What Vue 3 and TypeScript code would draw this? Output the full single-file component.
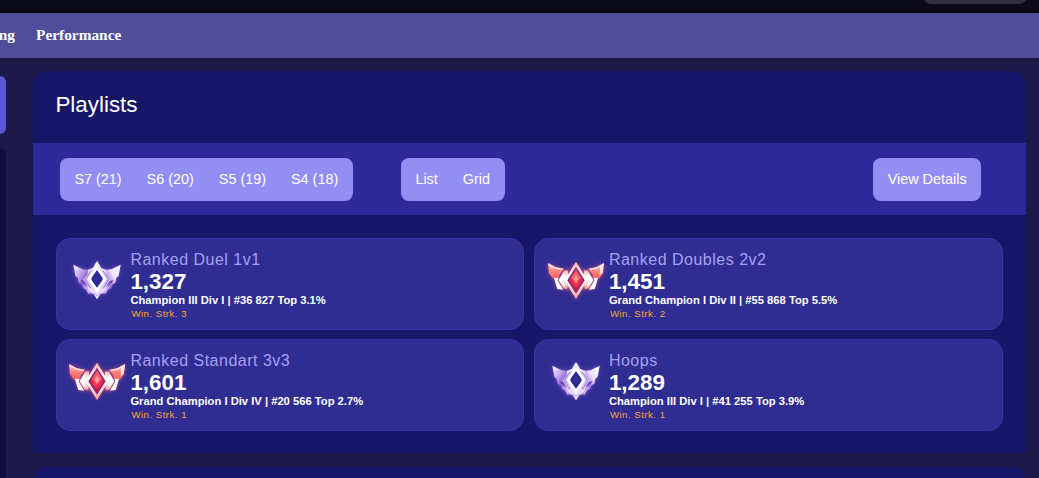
<script setup lang="ts">
interface Playlist {
  name: string
  rating: string
  detail: string
  streak: number
  rank: 'champion' | 'grand'
}

const seasons: string[] = ['S7 (21)', 'S6 (20)', 'S5 (19)', 'S4 (18)']
const views: string[] = ['List', 'Grid']

const playlists: Playlist[] = [
  { name: 'Ranked Duel 1v1', rating: '1,327', detail: 'Champion III Div I | #36 827 Top 3.1%', streak: 3, rank: 'champion' },
  { name: 'Ranked Doubles 2v2', rating: '1,451', detail: 'Grand Champion I Div II | #55 868 Top 5.5%', streak: 2, rank: 'grand' },
  { name: 'Ranked Standart 3v3', rating: '1,601', detail: 'Grand Champion I Div IV | #20 566 Top 2.7%', streak: 1, rank: 'grand' },
  { name: 'Hoops', rating: '1,289', detail: 'Champion III Div I | #41 255 Top 3.9%', streak: 1, rank: 'champion' },
]
</script>

<template>
  <div class="page">
    <header class="topbar"><div class="search"></div></header>
    <nav class="nav">
      <a class="clipped"><span>ng</span></a>
      <a>Performance</a>
    </nav>
    <div class="content">
      <aside class="side">
        <div class="side-active"></div>
        <div class="side-panel"></div>
      </aside>
      <main class="main">
        <section class="panel">
          <h2>Playlists</h2>
          <div class="toolbar">
            <div class="group"><span v-for="s in seasons" :key="s">{{ s }}</span></div>
            <div class="group views"><span v-for="v in views" :key="v">{{ v }}</span></div>
            <div class="group details"><span>View Details</span></div>
          </div>
          <div class="cards">
            <article v-for="p in playlists" :key="p.name" class="card">
              <svg v-if="p.rank === 'champion'" class="emblem champion" viewBox="-96 -72 192 144">
                <defs>
                  <linearGradient id="wingL" x1="0" y1="0" x2=".9" y2="1">
                    <stop offset="0" stop-color="#fff" /><stop offset=".35" stop-color="#c4a8f0" /><stop offset=".6" stop-color="#8a62cf" /><stop offset="1" stop-color="#c9aef2" />
                  </linearGradient>
                  <linearGradient id="wingR" x1="1" y1="0" x2="0" y2="1">
                    <stop offset="0" stop-color="#fff" /><stop offset=".4" stop-color="#ece1fc" /><stop offset=".65" stop-color="#9871d8" /><stop offset="1" stop-color="#c9aef2" />
                  </linearGradient>
                  <linearGradient id="plate" x1="0" y1="0" x2="0" y2="1">
                    <stop offset="0" stop-color="#fff" /><stop offset=".5" stop-color="#cfb8f3" /><stop offset="1" stop-color="#fff" />
                  </linearGradient>
                </defs>
                <path d="M-71-49 L-43-35 L-22-33 L-18 30 L-25 40 L-32 25 L-42 22 L-47 10 L-55 5 L-58-9 L-65-16Z" fill="url(#wingL)" />
                <path d="M71-49 L43-35 L22-33 L18 30 L25 40 L32 25 L42 22 L47 10 L55 5 L58-9 L65-16Z" fill="url(#wingR)" />
                <path d="M-50-2 L-34 0 L-26 12 L-44 7Z M50-2 L34 0 L26 12 L44 7Z" fill="#6d4cb0" />
                <path d="M-40 16 L-24 16 L-10 40 L-27 36Z M40 16 L24 16 L10 40 L27 36Z" fill="#c3a7ed" />
                <path d="M0-60 L13-39 L27-34 L28-20 L41-4 L29 13 L25 29 L12 36 L0 55 L-12 36 L-25 29 L-29 13 L-41-4 L-28-20 L-27-34 L-13-39Z" fill="url(#plate)" />
                <path d="M-18-31 L-35-4 L-19 22 M18-31 L35-4 L19 22" fill="none" stroke="#8b62d2" stroke-width="2.5" />
                <path d="M0-40 L24-6 L0 27 L-24-6Z" fill="#2e2a91" stroke="#fff" stroke-width="8" />
                <path d="M-26-6 L-17-11 V-1Z M26-6 L17-11 V-1Z" fill="#fff" />
                <path d="M-9 36 L0 44 L9 36" fill="none" stroke="#b594e8" stroke-width="3" />
              </svg>
              <svg v-else class="emblem grand" viewBox="-96 -72 192 144">
                <defs>
                  <linearGradient id="redWing" x1="0" y1="0" x2="0" y2="1">
                    <stop offset="0" stop-color="#ffd0cb" /><stop offset=".5" stop-color="#ff7f79" /><stop offset="1" stop-color="#ff5b5a" />
                  </linearGradient>
                  <linearGradient id="whiteRed" x1="0" y1="0" x2="0" y2="1">
                    <stop offset="0" stop-color="#ffb0aa" /><stop offset=".45" stop-color="#fff" /><stop offset="1" stop-color="#ffa29c" />
                  </linearGradient>
                  <radialGradient id="ruby" cy=".42">
                    <stop offset="0" stop-color="#ff9c9c" /><stop offset=".4" stop-color="#f54058" /><stop offset="1" stop-color="#dd0942" />
                  </radialGradient>
                </defs>
                <path d="M-84-54 L-60-41 L-36-37 L-49-20 L-53-3 L-70-8 L-81-23Z" fill="url(#redWing)" />
                <path d="M84-54 L60-41 L36-37 L49-20 L53-3 L70-8 L81-23Z" fill="url(#redWing)" />
                <path d="M-82-50 L-62-39 L-39-35" fill="none" stroke="#ffe7e4" stroke-width="4" />
                <path d="M82-50 L62-39 L42-35" fill="none" stroke="#ffe7e4" stroke-width="4" />
                <path d="M84-54 L80-26 L71-16 L72-43Z" fill="#ffe6e4" />
                <path d="M-66-10 L-50-8 L-43 7 L-39 26 L-56 24 L-61 8Z" fill="#fff" />
                <path d="M66-10 L50-8 L43 7 L39 26 L56 24 L61 8Z" fill="#fff" />
                <path d="M-36-33 L-22-33 L-24 25 L-38 24 L-54-2Z M36-33 L22-33 L24 25 L38 24 L54-2Z" fill="url(#whiteRed)" stroke="#8c4583" stroke-width="3" />
                <path d="M-36-20 L-45-2 L-35 14 M36-20 L45-2 L35 14" fill="none" stroke="#fff" stroke-width="7" />
                <path d="M0-58 L35-2 L0 54 L-35-2Z" fill="url(#whiteRed)" />
                <path d="M0-43 L26-2 L0 38 L-26-2Z" fill="#70337d" />
                <path d="M0-35 L21-2 L0 31 L-21-2Z" fill="url(#ruby)" />
                <path d="M0-34 L16-8 L0-2 L-16-8Z" fill="#f87078" opacity=".65" />
                <path d="M0-20 L4-9 L10-6 L4-3 L0 8 L-4-3 L-10-6 L-4-9Z" fill="#ffa5a3" opacity=".8" />
              </svg>
              <div class="info">
                <div class="name">{{ p.name }}</div>
                <div class="rating">{{ p.rating }}</div>
                <div class="detail">{{ p.detail }}</div>
                <div class="streak">Win. Strk. {{ p.streak }}</div>
              </div>
            </article>
          </div>
        </section>
        <section class="panel next"></section>
      </main>
    </div>
  </div>
</template>

<style>
body { margin: 0; background: #1d1a49; }
</style>

<style scoped>
.page { height: 478px; overflow: hidden; display: flex; flex-direction: column; background: #1d1a49; font-family: "Liberation Sans", Arial, sans-serif; color: #fff; }
.topbar { box-sizing: border-box; height: 13px; flex: none; display: flex; justify-content: flex-end; padding-right: 12px; background: linear-gradient(#0b0a1c, #090817); border-bottom: 1px solid #020108; }
.search { width: 104px; height: 24px; margin-top: -20px; background: #312f40; border-radius: 8px; }
.nav { box-sizing: border-box; height: 45px; flex: none; display: flex; align-items: center; gap: 21px; padding-bottom: 1px; background: #504e9b; font: bold 15.36px "Liberation Serif", "Times New Roman", serif; }
.clipped { width: 15px; display: flex; justify-content: flex-end; }
.content { flex: 1; display: flex; gap: 27px; }
.side { width: 6px; padding-top: 18px; display: flex; flex-direction: column; gap: 14px; }
.side-active { height: 58px; border-radius: 0 6px 6px 0; background: #5a56d5; }
.side-panel { flex: 1; border-radius: 0 6px 0 0; background: #100d43; }
.main { width: 993px; padding-top: 13px; display: flex; flex-direction: column; gap: 14px; }
.panel { box-sizing: border-box; height: 382px; flex: none; background: #171769; border-radius: 13px 13px 0 0; }
.next { height: 40px; }
h2 { box-sizing: border-box; margin: 0; height: 72px; padding: 21px 0 0 22.4px; font-size: 22.4px; line-height: 26px; font-weight: 400; }
.toolbar { box-sizing: border-box; height: 72px; display: flex; align-items: flex-start; padding: 15px 45px 0 27px; background: #2d2998; }
.group { box-sizing: border-box; height: 43px; display: flex; align-items: center; gap: 25px; padding: 0 14.4px 2px; background: #938ef4; border-radius: 8px; font-size: 14.4px; white-space: nowrap; }
.views { margin-left: 48px; padding: 0 14.8px 2px; }
.details { margin-left: auto; }
.cards { display: grid; grid-template-columns: 468px 469px; grid-auto-rows: 92px; column-gap: 10px; row-gap: 9px; padding: 23px 23px 0; }
.card { box-sizing: border-box; display: flex; border: 1px solid #3834a5; border-radius: 14px; background: #2f2d92; padding: 11px 0 0 8px; }
.card:nth-child(even) { padding-left: 8.5px; }
.emblem { width: 64px; height: 48px; flex: none; margin-top: 7px; }
.champion { filter: drop-shadow(0 0 2px #7849cf); }
.grand { filter: drop-shadow(0 0 2px #a74283); }
.info { margin-left: 1.4px; white-space: nowrap; }
.name { font-size: 16px; line-height: 20px; letter-spacing: .5px; color: #a5a1f1; }
.rating { font-size: 22.4px; line-height: 24px; font-weight: 700; }
.detail { margin-top: -1px; font-size: 11.2px; line-height: 14px; font-weight: 700; letter-spacing: .01px; }
.streak { padding-left: 1px; font-size: 9.6px; line-height: 13px; letter-spacing: .5px; color: #ffa62b; }
</style>
